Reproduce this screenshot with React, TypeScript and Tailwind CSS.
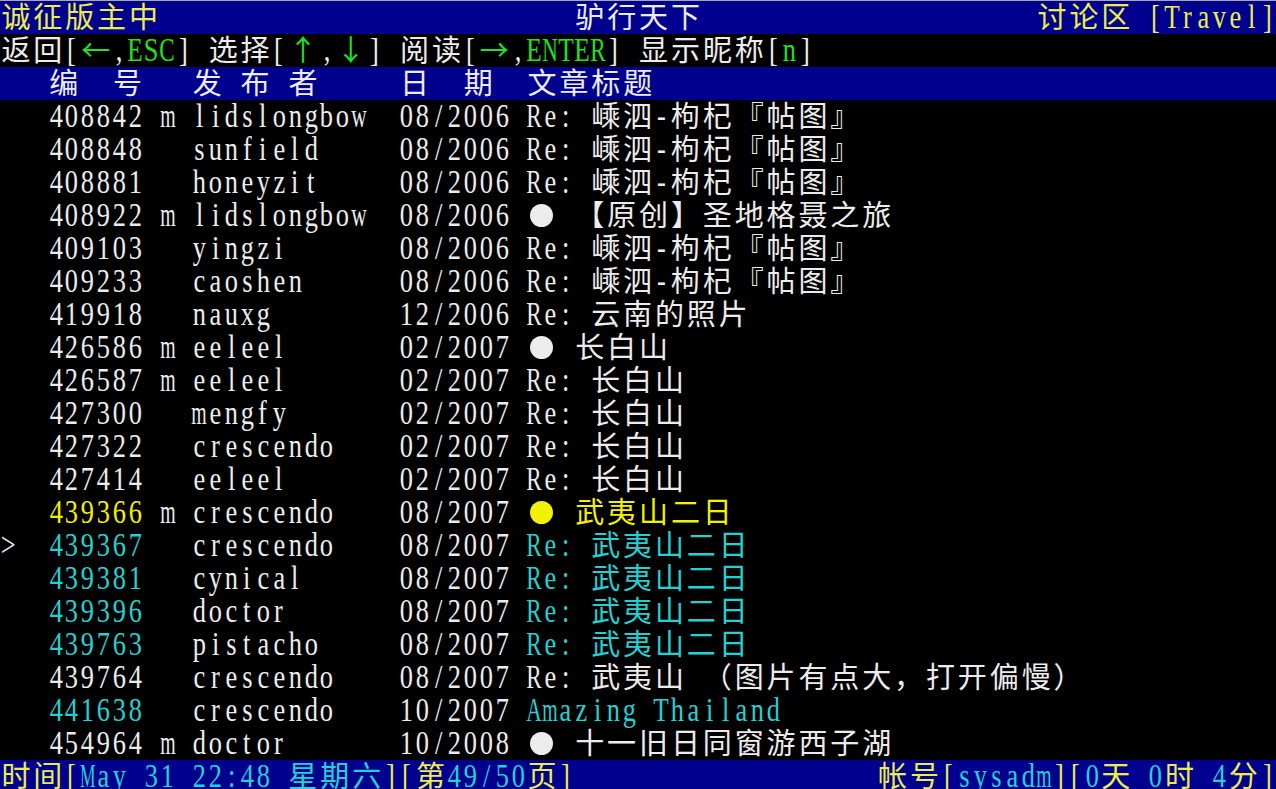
import React from 'react';

// colour keys for terminal text
const COLORS: Record<string, string> = {
  W: 'text-[#ececec]',
  Y: 'text-[#eded4a]',
  L: 'text-[#f2f200]',
  C: 'text-[#22d2d2]',
  G: 'text-[#22e022]',
};

// wide latin glyphs get squeezed harder so they stay inside one cell
const SQUEEZE: Record<string, string> = {
  E: 'scale-x-[0.77]',
  T: 'scale-x-[0.77]',
  C: 'scale-x-[0.7]',
  R: 'scale-x-[0.7]',
  A: 'scale-x-[0.65]',
  N: 'scale-x-[0.65]',
  w: 'scale-x-[0.65]',
  m: 'scale-x-[0.6]',
  M: 'scale-x-[0.53]',
};

type Seg = [number, string, keyof typeof COLORS];

const isWide = (ch: string) => {
  const cp = ch.codePointAt(0) ?? 0;
  return cp >= 0x2e80 || (cp >= 0x2190 && cp <= 0x21ff) || cp === 0x25cf;
};

function Cell({ ch, color }: { ch: string; color: string }) {
  if (ch === '●') {
    return (
      <span className={`flex h-[33px] w-[31.9px] shrink-0 items-center justify-center ${color}`}>
        <span className="h-[23px] w-[23px] rounded-full bg-current" />
      </span>
    );
  }
  if (isWide(ch)) {
    return (
      <span
        className={`flex w-[31.9px] shrink-0 justify-center self-start font-['Noto_Sans_CJK_SC',sans-serif] text-[29px] leading-[29px] ${color}`}
      >
        {ch}
      </span>
    );
  }
  return (
    <span className={`flex w-[15.95px] shrink-0 justify-center ${color}`}>
      <span className={`inline-block whitespace-pre ${SQUEEZE[ch] ?? 'scale-x-[0.8]'}`}>{ch}</span>
    </span>
  );
}

function Line({ segs, blue }: { segs: Seg[]; blue?: boolean }) {
  const cells: React.ReactNode[] = [];
  let col = 0;
  segs.forEach(([start, text, c]) => {
    while (col < start) {
      cells.push(<Cell key={`s${col}`} ch=" " color="" />);
      col++;
    }
    Array.from(text).forEach((ch) => {
      cells.push(<Cell key={`c${col}`} ch={ch} color={COLORS[c]} />);
      col += isWide(ch) ? 2 : 1;
    });
  });
  return (
    <div className={`flex h-[33px] shrink-0 leading-[33px] ${blue ? 'bg-[#00008e]' : 'bg-black'}`}>
      {cells}
    </div>
  );
}

interface Post {
  num: string;
  m?: boolean;
  author: string;
  date: string;
  title: string;
  numColor?: keyof typeof COLORS;
  titleColor?: keyof typeof COLORS;
  cursor?: boolean;
}

const POSTS: Post[] = [
  { num: '408842', m: true, author: 'lidslongbow', date: '08/2006', title: 'Re: 嵊泗-枸杞『帖图』' },
  { num: '408848', author: 'sunfield', date: '08/2006', title: 'Re: 嵊泗-枸杞『帖图』' },
  { num: '408881', author: 'honeyzit', date: '08/2006', title: 'Re: 嵊泗-枸杞『帖图』' },
  { num: '408922', m: true, author: 'lidslongbow', date: '08/2006', title: '● 【原创】圣地格聂之旅' },
  { num: '409103', author: 'yingzi', date: '08/2006', title: 'Re: 嵊泗-枸杞『帖图』' },
  { num: '409233', author: 'caoshen', date: '08/2006', title: 'Re: 嵊泗-枸杞『帖图』' },
  { num: '419918', author: 'nauxg', date: '12/2006', title: 'Re: 云南的照片' },
  { num: '426586', m: true, author: 'eeleel', date: '02/2007', title: '● 长白山' },
  { num: '426587', m: true, author: 'eeleel', date: '02/2007', title: 'Re: 长白山' },
  { num: '427300', author: 'mengfy', date: '02/2007', title: 'Re: 长白山' },
  { num: '427322', author: 'crescendo', date: '02/2007', title: 'Re: 长白山' },
  { num: '427414', author: 'eeleel', date: '02/2007', title: 'Re: 长白山' },
  { num: '439366', m: true, author: 'crescendo', date: '08/2007', title: '● 武夷山二日', numColor: 'L', titleColor: 'L' },
  { num: '439367', author: 'crescendo', date: '08/2007', title: 'Re: 武夷山二日', numColor: 'C', titleColor: 'C', cursor: true },
  { num: '439381', author: 'cynical', date: '08/2007', title: 'Re: 武夷山二日', numColor: 'C', titleColor: 'C' },
  { num: '439396', author: 'doctor', date: '08/2007', title: 'Re: 武夷山二日', numColor: 'C', titleColor: 'C' },
  { num: '439763', author: 'pistacho', date: '08/2007', title: 'Re: 武夷山二日', numColor: 'C', titleColor: 'C' },
  { num: '439764', author: 'crescendo', date: '08/2007', title: 'Re: 武夷山 （图片有点大，打开偏慢）' },
  { num: '441638', author: 'crescendo', date: '10/2007', title: 'Amazing Thailand', numColor: 'C', titleColor: 'C' },
  { num: '454964', m: true, author: 'doctor', date: '10/2008', title: '● 十一旧日同窗游西子湖' },
];

const postSegs = (p: Post): Seg[] => {
  const segs: Seg[] = [];
  if (p.cursor) segs.push([0, '>', 'W']);
  segs.push([3, p.num, p.numColor ?? 'W']);
  if (p.m) segs.push([10, 'm', 'W']);
  segs.push([12, p.author, 'W']);
  segs.push([25, p.date, 'W']);
  segs.push([33, p.title, p.titleColor ?? 'W']);
  return segs;
};

export default function App() {
  return (
    <div className="h-[789px] w-[1276px] overflow-hidden bg-black font-['Liberation_Serif','Noto_Sans_CJK_SC',serif] text-[33px]">
      <div className="h-px bg-[#a8a8a8]" />
      <div className="flex flex-col">
        <Line
          blue
          segs={[
            [0, '诚征版主中', 'Y'],
            [36, '驴行天下', 'W'],
            [65, '讨论区 [Travel]', 'Y'],
          ]}
        />
        <Line
          segs={[
            [0, '返回[', 'W'],
            [5, '←', 'G'],
            [7, ',', 'W'],
            [8, 'ESC', 'G'],
            [11, '] 选择[', 'W'],
            [18, '↑', 'G'],
            [20, ',', 'W'],
            [21, '↓', 'G'],
            [23, '] 阅读[', 'W'],
            [30, '→', 'G'],
            [32, ',', 'W'],
            [33, 'ENTER', 'G'],
            [38, '] 显示昵称[', 'W'],
            [49, 'n', 'G'],
            [50, ']', 'W'],
          ]}
        />
        <Line
          blue
          segs={[
            [3, '编', 'W'],
            [7, '号', 'W'],
            [12, '发', 'W'],
            [15, '布', 'W'],
            [18, '者', 'W'],
            [25, '日', 'W'],
            [29, '期', 'W'],
            [33, '文章标题', 'W'],
          ]}
        />
        {POSTS.map((p) => (
          <Line key={p.num} segs={postSegs(p)} />
        ))}
        <Line
          blue
          segs={[
            [0, '时间[', 'Y'],
            [5, 'May 31 22:48 星期六', 'C'],
            [24, '][第', 'Y'],
            [28, '49/50', 'C'],
            [33, '页]', 'Y'],
            [55, '帐号[', 'Y'],
            [60, 'sysadm', 'C'],
            [66, '][', 'Y'],
            [68, '0', 'C'],
            [69, '天 ', 'Y'],
            [72, '0', 'C'],
            [73, '时 ', 'Y'],
            [76, '4', 'C'],
            [77, '分]', 'Y'],
          ]}
        />
      </div>
    </div>
  );
}
